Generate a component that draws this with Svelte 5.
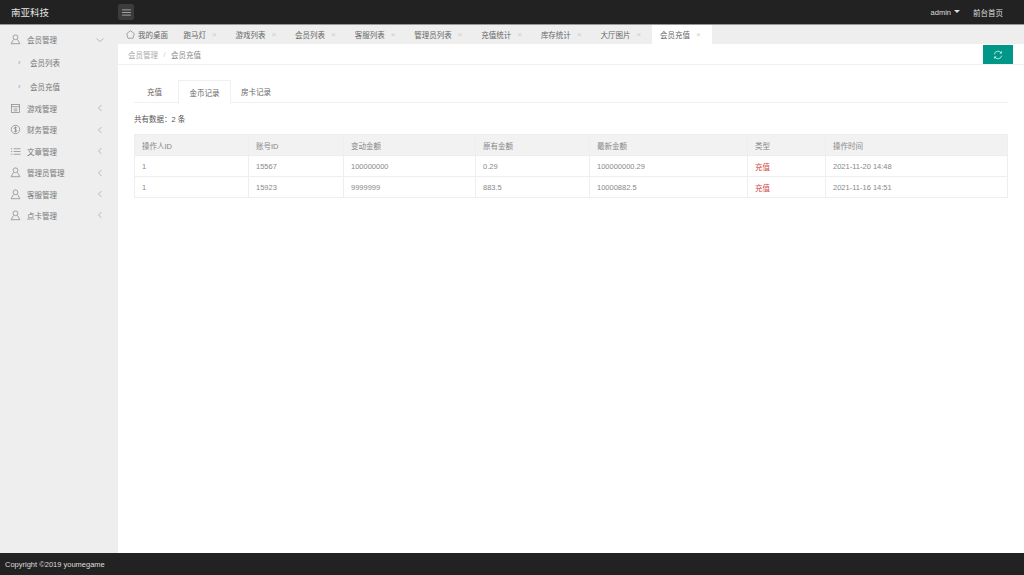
<script>
    const menu = [
        { name: '游戏管理', icon: 'box' },
        { name: '财务管理', icon: 'money' },
        { name: '文章管理', icon: 'list' },
        { name: '管理员管理', icon: 'user' },
        { name: '客服管理', icon: 'user' },
        { name: '点卡管理', icon: 'user' }
    ]
    const tabs = ['跑马灯', '游戏列表', '会员列表', '客服列表', '管理员列表', '充值统计', '库存统计', '大厅图片']
    const rows = [
        { op: '1', id: '15567', change: '100000000', old: '0.29', now: '100000000.29', type: '充值', time: '2021-11-20 14:48' },
        { op: '1', id: '15923', change: '9999999', old: '883.5', now: '10000882.5', type: '充值', time: '2021-11-16 14:51' }
    ]
</script>

{#snippet userIcon()}
    <svg class="ico" viewBox="0 0 12 12"><circle cx="6" cy="3.6" r="2.6" /><path d="M3.8 6 L1.2 10.6 H10.8 L8.2 6" /></svg>
{/snippet}

<div class="page">
    <header class="top">
        <div class="logo">南亚科技</div>
        <button class="toggle" aria-label="菜单">
            <svg viewBox="0 0 10 8" width="9" height="7"><path d="M0 1h10M0 4h10M0 7h10" /></svg>
        </button>
        <div class="top-right">
            <span class="admin">admin<i class="caret"></i></span>
            <span>前台首页</span>
        </div>
    </header>

    <div class="middle">
        <aside class="side">
            <div class="item">
                {@render userIcon()}
                <span class="label">会员管理</span>
                <svg class="arrow" viewBox="0 0 8 8"><path d="M0.5 2.5 L4 5.5 L7.5 2.5" /></svg>
            </div>
            <div class="sub"><span class="dot">›</span>会员列表</div>
            <div class="sub"><span class="dot">›</span>会员充值</div>
            {#each menu as m}
                <div class="item">
                    {#if m.icon === 'box'}
                        <svg class="ico" viewBox="0 0 12 12"><rect x="1.5" y="1.5" width="9" height="9" /><path d="M1.5 4h9M4 6.5h4M4 8.5h4" /></svg>
                    {:else if m.icon === 'money'}
                        <svg class="ico" viewBox="0 0 12 12"><circle cx="6" cy="6" r="4.6" /><path d="M7.6 4.3C7 3.5 4.6 3.4 4.6 4.7C4.6 6.2 7.6 5.6 7.6 7.3C7.6 8.6 5 8.5 4.3 7.6M6 2.6v6.8" /></svg>
                    {:else if m.icon === 'list'}
                        <svg class="ico" viewBox="0 0 12 12"><path d="M1 3h1.5M1 6h1.5M1 9h1.5M4 3h7.5M4 6h7.5M4 9h7.5" /></svg>
                    {:else}
                        {@render userIcon()}
                    {/if}
                    <span class="label">{m.name}</span>
                    <svg class="arrow" viewBox="0 0 8 8"><path d="M5.5 1 L2.5 4 L5.5 7" /></svg>
                </div>
            {/each}
        </aside>

        <main class="main">
            <nav class="tabbar">
                <div class="tab home">
                    <svg viewBox="0 0 10 10" width="9" height="9"><path d="M5 0.8 L9.2 4 L7.8 9.2 H2.2 L0.8 4 Z" /></svg>
                    <span>我的桌面</span>
                </div>
                {#each tabs as t}
                    <div class="tab"><span>{t}</span><span class="close">×</span></div>
                {/each}
                <div class="tab active"><span>会员充值</span><span class="close">×</span></div>
            </nav>

            <div class="crumb">
                <span>会员管理</span><span class="sep">/</span><span>会员充值</span>
                <button class="refresh" aria-label="刷新">
                    <svg viewBox="0 0 12 12" width="10" height="10"><path d="M1.6 5.2A4.5 4.5 0 0 1 9.6 3.2M10.4 6.8A4.5 4.5 0 0 1 2.4 8.8" /><path class="head" d="M10.6 1.2V4.2H7.6ZM1.4 10.8V7.8H4.4Z" /></svg>
                </button>
            </div>

            <section class="content">
                <div class="subtabs">
                    <div class="subtab">充值</div>
                    <div class="subtab on">金币记录</div>
                    <div class="subtab">房卡记录</div>
                </div>
                <p class="count">共有数据：2 条</p>
                <table>
                    <colgroup>
                        <col style="width:114px" /><col style="width:95px" /><col style="width:132px" />
                        <col style="width:114px" /><col style="width:158px" /><col style="width:78px" /><col />
                    </colgroup>
                    <thead>
                        <tr><th>操作人ID</th><th>账号ID</th><th>变动金额</th><th>原有金额</th><th>最新金额</th><th>类型</th><th>操作时间</th></tr>
                    </thead>
                    <tbody>
                        {#each rows as r}
                            <tr>
                                <td>{r.op}</td><td>{r.id}</td><td>{r.change}</td><td>{r.old}</td><td>{r.now}</td>
                                <td class="red">{r.type}</td><td>{r.time}</td>
                            </tr>
                        {/each}
                    </tbody>
                </table>
            </section>
        </main>
    </div>

    <footer class="foot">Copyright ©2019 youmegame</footer>
</div>

<style>
    :global(body) {
        margin: 0;
        background: #fff;
    }

    .page {
        display: flex;
        flex-direction: column;
        width: 1024px;
        height: 575px;
        overflow: hidden;
        font-family: "Liberation Sans", "Noto Sans CJK SC", sans-serif;
        font-size: 7.5px;
        color: #777;
    }

    .top {
        display: flex;
        align-items: center;
        flex: 0 0 24px;
        background: #222;
        color: #ddd;
        border-bottom: 1px solid #999;
    }

    .logo {
        width: 118px;
        padding-left: 11px;
        box-sizing: border-box;
        font-family: "Noto Sans CJK SC", sans-serif;
        font-size: 9.5px;
        color: #e4e4e4;
    }

    .toggle {
        display: flex;
        align-items: center;
        justify-content: center;
        width: 16px;
        height: 16px;
        padding: 0;
        border: 0;
        border-radius: 2px;
        background: #3c3c3c;
    }

    .toggle path {
        stroke: #ccc;
        stroke-width: 0.8;
        fill: none;
    }

    .top-right {
        display: flex;
        gap: 13px;
        margin-left: auto;
        padding-right: 21px;
    }

    .admin {
        display: flex;
        align-items: center;
        gap: 3px;
    }

    .caret {
        width: 0;
        height: 0;
        margin-bottom: 2px;
        border: 3px solid transparent;
        border-bottom: 0;
        border-top-color: #ddd;
    }

    .middle {
        display: flex;
        flex: 1;
        min-height: 0;
    }

    .side {
        flex: 0 0 118px;
        padding-top: 3px;
        background: #eee;
    }

    .item {
        display: flex;
        align-items: center;
        height: 21.4px;
        padding: 0 14px 0 10px;
    }

    .item:first-child {
        height: 23px;
    }

    .ico {
        width: 11px;
        height: 11px;
        margin-right: 6px;
        fill: none;
        stroke: #888;
        stroke-width: 0.8;
    }

    .arrow {
        width: 8px;
        height: 8px;
        margin-left: auto;
        fill: none;
        stroke: #aaa;
        stroke-width: 0.8;
    }

    .sub {
        display: flex;
        align-items: center;
        height: 23.4px;
        padding-left: 18px;
    }

    .dot {
        width: 12px;
        color: #999;
    }

    .main {
        display: flex;
        flex-direction: column;
        flex: 1;
        min-width: 0;
    }

    .tabbar {
        display: flex;
        flex: 0 0 19px;
        background: #eee;
    }

    .tab {
        display: flex;
        align-items: center;
        gap: 6px;
        padding: 0 6.5px 0 8px;
        height: 19px;
        color: #666;
    }

    .tab + .tab {
        width: 59.6px;
        box-sizing: border-box;
    }

    .tab:nth-child(2) {
        width: 52px;
    }

    .tab:nth-child(6) {
        width: 67px;
    }

    .home {
        gap: 3px;
        padding-right: 7.5px;
    }

    .home path {
        fill: none;
        stroke: #888;
        stroke-width: 0.8;
    }

    .close {
        font-size: 8px;
        color: #ccc;
    }

    .tab.active {
        background: #fff;
    }

    .crumb {
        display: flex;
        align-items: center;
        gap: 5.5px;
        position: relative;
        flex: 0 0 20px;
        padding-left: 10px;
        border-bottom: 1px solid #f0f0f0;
        color: #aaa;
    }

    .crumb span:last-of-type {
        color: #888;
    }

    .sep {
        color: #ccc;
    }

    .refresh {
        display: flex;
        align-items: center;
        justify-content: center;
        position: absolute;
        top: 1px;
        right: 11px;
        width: 30px;
        height: 19px;
        padding: 0;
        border: 0;
        background: #009688;
    }

    .refresh path {
        fill: none;
        stroke: #d8f0ee;
        stroke-width: 1;
    }

    .refresh path.head {
        fill: #d8f0ee;
        stroke: none;
    }

    .content {
        flex: 1;
        padding: 15px 16px 0 16px;
    }

    .subtabs {
        display: flex;
        height: 22px;
        padding-left: 2px;
        border-bottom: 1px solid #f0f0f0;
    }

    .subtab {
        display: flex;
        align-items: center;
        justify-content: center;
        padding: 0 10px;
        width: 30px;
        color: #666;
    }

    .subtab:first-child {
        width: 15px;
        padding: 0 16px 0 11px;
    }

    .subtab.on {
        width: 31px;
        height: 23px;
        box-sizing: content-box;
        padding: 0 10px;
        background: #fff;
        border: 1px solid #f0f0f0;
        border-bottom: 0;
    }

    .count {
        margin: 10px 0 0;
        height: 21px;
        line-height: 14px;
        color: #555;
    }

    table {
        width: 874px;
        table-layout: fixed;
        border-collapse: collapse;
    }

    th, td {
        height: 21px;
        padding: 0 0 0 7px;
        box-sizing: border-box;
        text-align: left;
        font-weight: normal;
        color: #888;
        border: 1px solid #eee;
    }

    th {
        background: #f2f2f2;
    }

    .red {
        color: #d04a46;
    }

    .foot {
        display: flex;
        align-items: center;
        flex: 0 0 22px;
        padding-left: 5px;
        background: #222;
        color: #ddd;
    }
</style>
